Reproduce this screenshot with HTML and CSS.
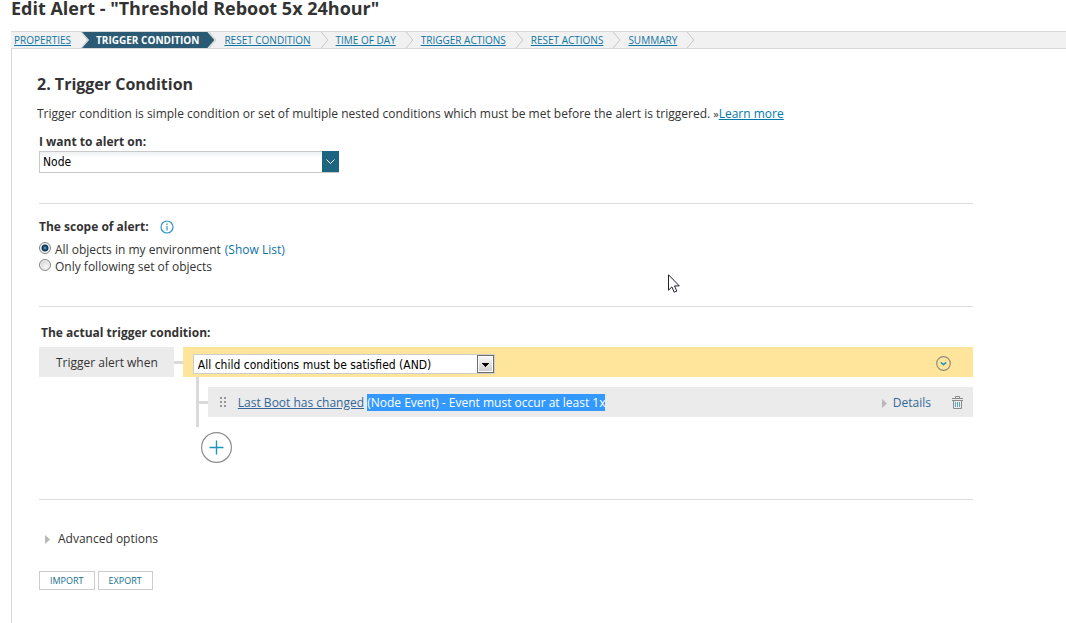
FILE: index.html
```html
<!DOCTYPE html>
<html lang="en">
<head>
<meta charset="utf-8">
<title>Edit Alert</title>
<meta name="viewport" content="width=device-width, initial-scale=1">
<link rel="stylesheet" href="styles.css">
</head>
<body>
<div class="page">
  <h1 class="page-title">Edit Alert - "Threshold Reboot 5x 24hour"</h1>
  <nav class="wizard" aria-label="Wizard steps">
    <a class="step" href="#">PROPERTIES</a>
    <svg class="chevron" viewBox="0 0 9 17"><path d="M1 0l7 8.500-7 8.500"/></svg>
    <span class="step-current" aria-current="step">TRIGGER CONDITION</span>
    <svg class="chevron chevron-tucked" viewBox="0 0 9 17"><path d="M1 0l7 8.500-7 8.500"/></svg>
    <a class="step" href="#">RESET CONDITION</a>
    <svg class="chevron" viewBox="0 0 9 17"><path d="M1 0l7 8.500-7 8.500"/></svg>
    <a class="step" href="#">TIME OF DAY</a>
    <svg class="chevron" viewBox="0 0 9 17"><path d="M1 0l7 8.500-7 8.500"/></svg>
    <a class="step" href="#">TRIGGER ACTIONS</a>
    <svg class="chevron" viewBox="0 0 9 17"><path d="M1 0l7 8.500-7 8.500"/></svg>
    <a class="step" href="#">RESET ACTIONS</a>
    <svg class="chevron" viewBox="0 0 9 17"><path d="M1 0l7 8.500-7 8.500"/></svg>
    <a class="step" href="#">SUMMARY</a>
    <svg class="chevron" viewBox="0 0 9 17"><path d="M1 0l7 8.500-7 8.500"/></svg>
  </nav>
  <main class="content">
    <header class="intro">
      <h2 class="section-title">2. Trigger Condition</h2>
      <p class="description">Trigger condition is simple condition or set of multiple nested conditions which must be met before the alert is triggered. <span class="more">»</span><a class="link" href="#">Learn more</a></p>
    </header>

    <section class="block block-object">
      <label class="label" for="object-type">I want to alert on:</label>
      <div class="combo">
        <select class="combo-field" id="object-type"><option>Node</option></select>
        <svg class="combo-arrow" viewBox="0 0 17 21"><path d="M4.500 8.500l4 4 4-4"/></svg>
      </div>
    </section>

    <section class="block block-scope">
      <div class="scope-head">
        <h3 class="label">The scope of alert:</h3>
        <svg class="info" viewBox="0 0 14 14"><circle cx="7" cy="7" r="6"/><path d="M7 6v4.500M7 3.500v1.500"/></svg>
      </div>
      <div class="radio-row">
        <input class="radio" type="radio" name="scope" id="scope-all" checked>
        <label for="scope-all">All objects in my environment</label>
        <a class="show-list" href="#">(Show List)</a>
      </div>
      <div class="radio-row">
        <input class="radio" type="radio" name="scope" id="scope-set">
        <label for="scope-set">Only following set of objects</label>
      </div>
    </section>

    <section class="block block-condition">
      <h3 class="label label-condition">The actual trigger condition:</h3>
      <div class="condition">
        <label class="when" for="operator">Trigger alert when</label>
        <span class="connector"></span>
        <div class="group">
          <div class="group-head">
            <div class="operator">
              <select class="operator-field" id="operator"><option>All child conditions must be satisfied (AND)</option></select>
              <svg class="operator-arrow" viewBox="0 0 17 18"><defs><linearGradient id="face" x2="0" y2="1"><stop stop-color="#f6f6f6"/><stop offset="1" stop-color="#cfcfcf"/></linearGradient></defs><rect x=".5" y=".5" width="16" height="17" fill="#fff" stroke="#6b7069"/><rect x="2" y="2" width="13" height="14" fill="url(#face)"/><path d="M5 8h7v1h-1v1h-1v1H9v1H8v-1H7v-1H6V9H5z"/></svg>
            </div>
            <button class="icon-button" type="button" aria-label="Group menu"><svg width="15" height="15" viewBox="0 0 15 15" fill="none"><circle cx="7.500" cy="7.500" r="6.800" stroke="#8c8c80" stroke-width="1.200"/><path d="M4.800 6.300l2.700 2.400 2.700-2.400" stroke="#2a9bb8" stroke-width="1.600"/></svg></button>
          </div>
          <div class="children">
            <div class="rule">
              <svg class="grip" viewBox="0 0 7 10"><path d="M0 0h2v2H0zM4 0h2v2H4zM0 4h2v2H0zM4 4h2v2H4zM0 8h2v2H0zM4 8h2v2H4z"/></svg>
              <p class="rule-text"><a class="rule-link" href="#">Last Boot has changed</a> <mark class="selected">(Node Event) - Event must occur at least 1x</mark></p>
              <button class="details" type="button"><svg class="triangle" viewBox="0 0 5 9"><path d="M0 0l5 4.500L0 9z"/></svg>Details</button>
              <button class="icon-button" type="button" aria-label="Delete condition"><svg width="11" height="13" viewBox="0 0 11 13" fill="none"><path d="M0 2.500h11M3.500 2V.5h4V2M0 4.500h11M1.500 5v7.500h8V5" stroke="#8b8b8b"/><path d="M3.500 6v5M5.500 6v5M7.500 6v5" stroke="#57a9c5"/></svg></button>
            </div>
          </div>
          <button class="add" type="button" aria-label="Add condition"><svg width="31" height="31" viewBox="0 0 31 31" fill="none"><circle cx="15.500" cy="15.500" r="14.900" stroke="#8d8d8d" stroke-width="1.200"/><path d="M8.500 15.500h14M15.500 8.500v14" stroke="#1e95bc" stroke-width="1.400"/></svg></button>
        </div>
      </div>
    </section>

    <footer class="foot">
      <button class="advanced" type="button"><svg class="triangle" viewBox="0 0 5 9"><path d="M0 0l5 4.500L0 9z"/></svg>Advanced options</button>
      <div class="actions">
        <button class="action" type="button">IMPORT</button>
        <button class="action" type="button">EXPORT</button>
      </div>
    </footer>
  </main>
  <svg class="cursor" viewBox="0 0 12 19"><path d="M.5.8v15.400l3.400-3.300 2.300 5.300 2.600-1.100-2.300-5.200h4.800z"/></svg>
</div>
</body>
</html>
```
FILE: styles.css
```css
* {
  box-sizing: border-box;
}

body {
  margin: 0;
  background: #fff;
  color: #333;
  font: 12px/18px "Open Sans", "Noto Sans", sans-serif;
}

h1, h2, h3, p {
  margin: 0;
}

button {
  padding: 0;
  border: 0;
  background: none;
  color: inherit;
  font: inherit;
  cursor: pointer;
}

svg {
  display: block;
  flex: none;
}

.page {
  display: flex;
  flex-direction: column;
  min-height: 100vh;
  padding-left: 11px;
}

.page-title {
  margin-bottom: 15px;
  font-size: 18px;
  line-height: 16px;
}

.wizard {
  display: flex;
  align-items: center;
  height: 18px;
  padding-left: 3px;
  border: 1px solid #d8d8d5;
  border-width: 1px 0;
  background: #f1f1f1;
  font-size: 10px;
  line-height: 16px;
  white-space: nowrap;
}

.step {
  margin-right: 9px;
  color: #0f76a3;
}

.chevron {
  width: 9px;
  height: 16px;
  margin-right: 7px;
  fill: none;
  stroke: #c4c4c4;
}

.step-current {
  margin-left: -14px;
  padding: 0 15px 0 14px;
  background: #2b5a74;
  clip-path: polygon(0 0, calc(100% - 7px) 0, 100% 50%, calc(100% - 7px) 100%, 0 100%, 7px 50%);
  color: #fff;
  font-weight: 700;
}

.chevron-tucked {
  margin-left: -6px;
}

.content {
  flex: 1;
  padding: 25px 93px 33px 27px;
  border-left: 1px solid #d8d8d8;
}

.intro {
  margin-left: -2px;
}

.section-title {
  font-size: 16px;
  line-height: 20px;
}

.description {
  margin-top: 11px;
}

.more {
  font-size: 11px;
}

.link {
  color: #0079aa;
}

.block {
  border-bottom: 1px solid #dcdcdc;
}

.block-object {
  padding: 10px 0 30px;
}

.label {
  display: block;
  font-size: 12px;
  font-weight: 700;
}

.combo {
  position: relative;
  width: 300px;
}

.combo-field {
  display: block;
  width: 100%;
  height: 22px;
  padding: 0 22px 0 3px;
  border: 1px solid #c9c9c9;
  border-radius: 0;
  background: linear-gradient(#eef1f2, #fff 6px);
  color: #000;
  font: 12px/20px "DejaVu Sans Condensed", "DejaVu Sans", sans-serif;
  appearance: none;
}

.combo-arrow {
  position: absolute;
  top: 0;
  right: 0;
  width: 17px;
  height: 21px;
  background: #1c647f;
  fill: none;
  stroke: #fff;
  pointer-events: none;
}

.block-scope {
  padding: 14px 0 31px;
}

.scope-head {
  display: flex;
  align-items: center;
  gap: 11px;
  margin-bottom: 5px;
}

.info {
  width: 14px;
  height: 14px;
  fill: none;
  stroke: #2f96c5;
  stroke-width: 1.2;
}

.radio-row {
  display: flex;
  align-items: center;
  gap: 4px;
  line-height: 17px;
}

.radio {
  width: 12px;
  height: 12px;
  margin: 0 0 3px;
  border: 1px solid #858585;
  border-radius: 50%;
  background: radial-gradient(circle at 60% 65%, #f8f8f8, #c8c8c8);
  box-shadow: inset 0 0 0 1px #f4f4f4;
  appearance: none;
}

.radio:checked {
  background: radial-gradient(circle, #4ab5e0 0, #12496f 2px, #0c2c4b 3px, #e8eef2 4px);
}

.show-list {
  color: #0f72a3;
  text-decoration: none;
}

.block-condition {
  padding: 17px 0 36px;
}

.label-condition {
  margin: 0 2px 5px;
}

.condition {
  display: flex;
  align-items: flex-start;
}

.when {
  padding: 2px 16px 0 17px;
  background: #ebebeb;
  line-height: 28px;
  white-space: nowrap;
}

.connector {
  width: 9px;
  height: 3px;
  margin-top: 14px;
  background: #dadada;
}

.group {
  flex: 1;
}

.group-head {
  display: flex;
  align-items: center;
  justify-content: space-between;
  height: 30px;
  padding: 3px 22px 0 10px;
  background: #ffe59b;
}

.operator {
  position: relative;
  width: 302px;
}

.operator-field {
  display: block;
  width: 100%;
  height: 20px;
  padding: 1px 18px 0 4px;
  border: 1px solid #ccc;
  border-radius: 0;
  background: #fff;
  color: #000;
  font: 12px/18px "DejaVu Sans Condensed", "DejaVu Sans", sans-serif;
  appearance: none;
}

.operator-arrow {
  position: absolute;
  top: 1px;
  right: 1px;
  width: 17px;
  height: 18px;
  pointer-events: none;
}

.children {
  margin-left: 13px;
  padding: 10px 0;
  border-left: 3px solid #dadada;
}

.rule {
  display: flex;
  align-items: center;
  height: 30px;
  padding: 0 10px 0 12px;
  border-left: 9px solid transparent;
  background: linear-gradient(#dadada, #dadada) 0 14px / 9px 3px no-repeat border-box, linear-gradient(#ebebeb, #ebebeb) padding-box;
}

.grip {
  width: 7px;
  height: 10px;
  fill: #969696;
}

.rule-text {
  flex: 1;
  margin-left: 11px;
  padding-top: 2px;
}

.rule-link {
  color: #336699;
}

.selected {
  background: #3399ff;
  color: #fff;
}

.details,
.advanced {
  display: flex;
  align-items: center;
}

.details {
  gap: 6px;
  margin-right: 21px;
  padding-top: 2px;
  color: #336699;
}

.triangle {
  width: 5px;
  height: 9px;
  fill: #b8b8b8;
}

.add {
  display: block;
  margin: 5px 0 0 18px;
}

.foot {
  padding-top: 30px;
}

.advanced {
  gap: 8px;
  margin-left: 6px;
}

.actions {
  display: flex;
  gap: 3px;
  margin-top: 23px;
}

.action {
  padding: 0 10px;
  border: 1px solid #ccc;
  background: #fff;
  color: #14708d;
  font-size: 9px;
  line-height: 17px;
}

.cursor {
  position: absolute;
  top: 274px;
  left: 668px;
  width: 12px;
  height: 19px;
  fill: #fff;
  stroke: #20222e;
  pointer-events: none;
}
```
